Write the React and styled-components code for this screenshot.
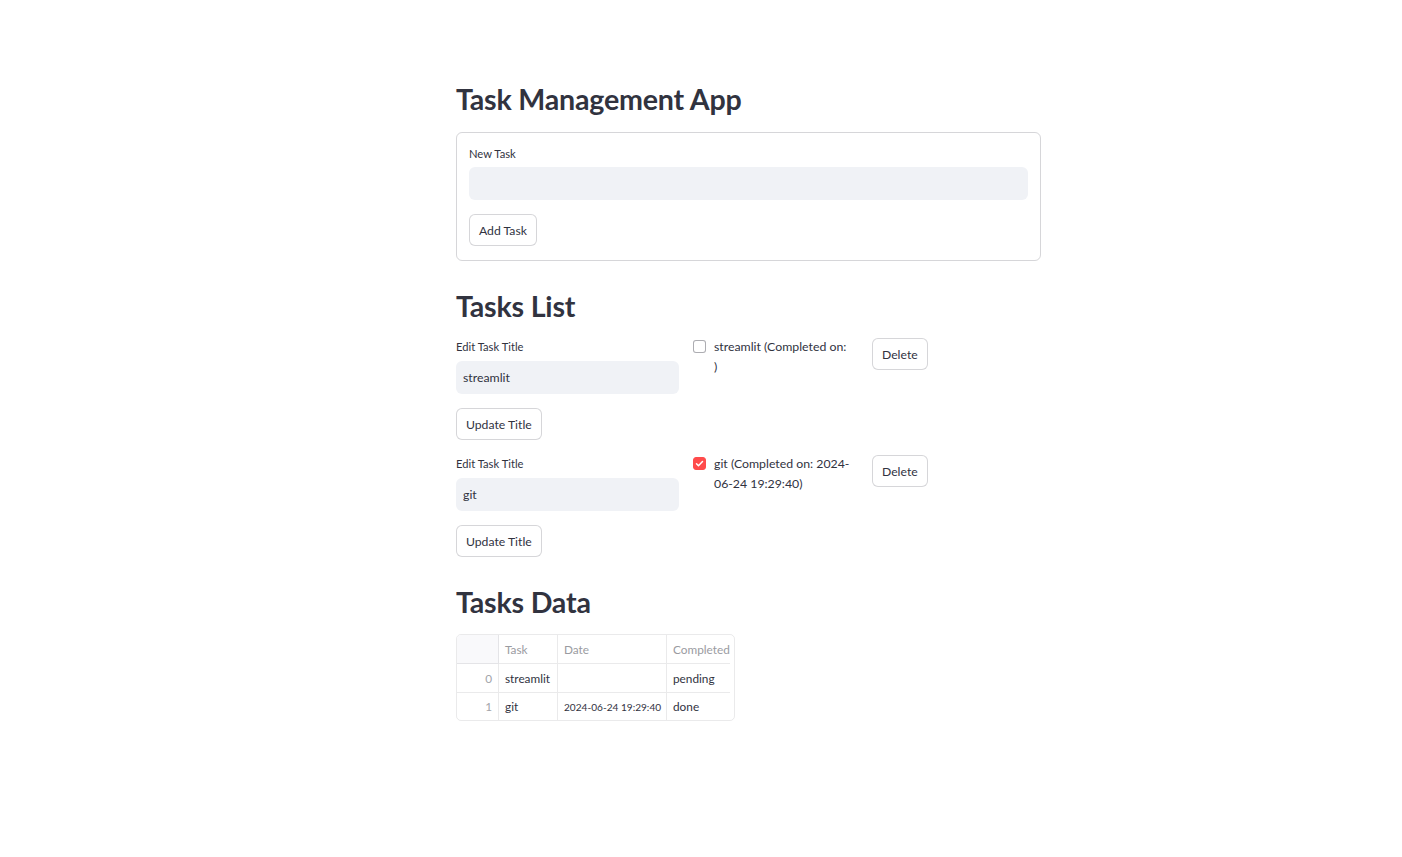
import React from "react";
import styled, { createGlobalStyle } from "styled-components";

const GlobalStyle = createGlobalStyle`
  html, body {
    margin: 0;
    padding: 0;
    background: #ffffff;
  }
  body {
    font-family: Lato, "Noto Sans", "Liberation Sans", sans-serif;
    color: #31333f;
  }
`;

const tasks = [
  { title: "streamlit", date: "", done: false },
  { title: "git", date: "2024-06-24 19:29:40", done: true },
];

function CheckIcon() {
  return (
    <svg width="9" height="9" viewBox="0 0 12 12" fill="none">
      <path
        d="M2 6.3l2.6 2.6L10 3.4"
        stroke="#fff"
        strokeWidth="2"
        strokeLinecap="round"
        strokeLinejoin="round"
      />
    </svg>
  );
}

function TaskRow({ task }) {
  return (
    <Row>
      <Column>
        <Label>Edit Task Title</Label>
        <TextInput defaultValue={task.title} />
        <Button>Update Title</Button>
      </Column>
      <CheckLine>
        <Box checked={task.done}>{task.done && <CheckIcon />}</Box>
        <CheckText>
          {task.title} (Completed on: {task.date})
        </CheckText>
      </CheckLine>
      <ActionCell>
        <Button>Delete</Button>
      </ActionCell>
    </Row>
  );
}

export default function App() {
  return (
    <>
      <GlobalStyle />
      <Page>
        <Main>
          <Title>Task Management App</Title>
          <Form>
            <Label tight>New Task</Label>
            <TextInput />
            <Button>Add Task</Button>
          </Form>

          <Heading>Tasks List</Heading>
          <RowList>
            {tasks.map((t) => (
              <TaskRow key={t.title} task={t} />
            ))}
          </RowList>

          <Heading>Tasks Data</Heading>
          <TableFrame>
            <Table>
              <HeadCell index />
              <HeadCell>Task</HeadCell>
              <HeadCell>Date</HeadCell>
              <HeadCell>Completed</HeadCell>
              {tasks.map((t, i) => {
                const last = i === tasks.length - 1;
                return (
                  <React.Fragment key={t.title}>
                    <IndexCell last={last}>{i}</IndexCell>
                    <Cell last={last}>{t.title}</Cell>
                    <Cell last={last} small>
                      {t.date}
                    </Cell>
                    <Cell last={last}>{t.done ? "done" : "pending"}</Cell>
                  </React.Fragment>
                );
              })}
            </Table>
          </TableFrame>
        </Main>
      </Page>
    </>
  );
}

const Page = styled.div`
  min-height: 857px;
  padding-left: 456px;
`;

const Main = styled.main`
  width: 585px;
  padding-top: 81px;
  display: flex;
  flex-direction: column;
  align-items: flex-start;
`;

const Title = styled.h1`
  margin: 0 0 15px;
  font-size: 28.6px;
  line-height: 36px;
  font-weight: 700;
  letter-spacing: -0.2px;
  color: #31333f;
`;

const Heading = styled.h2`
  margin: 27px 0 16px;
  font-size: 28.6px;
  line-height: 36px;
  font-weight: 700;
  letter-spacing: -0.2px;
  color: #31333f;
`;

const Form = styled.div`
  box-sizing: border-box;
  width: 100%;
  border: 1px solid rgba(49, 51, 63, 0.2);
  border-radius: 6px;
  padding: 13px 12px 14px;
  display: flex;
  flex-direction: column;
  align-items: flex-start;
`;

const Label = styled.div`
  font-size: 11.2px;
  line-height: ${(p) => (p.tight ? "16px" : "14px")};
  margin-bottom: ${(p) => (p.tight ? "5px" : "7px")};
`;

const TextInput = styled.input`
  box-sizing: border-box;
  width: 100%;
  height: 33px;
  border: none;
  border-radius: 6px;
  background: #f0f2f6;
  padding: 0 7px;
  font-family: inherit;
  font-size: 12.3px;
  color: #31333f;
  outline: none;
  margin-bottom: 14px;
`;

const Button = styled.button`
  box-sizing: border-box;
  height: 32px;
  padding: 0 9px;
  background: #fff;
  border: 1px solid rgba(49, 51, 63, 0.2);
  border-radius: 6px;
  font-family: inherit;
  font-size: 12.2px;
  color: #31333f;
  cursor: pointer;
`;

const RowList = styled.div`
  width: 100%;
  display: flex;
  flex-direction: column;
  gap: 17px;
`;

const Row = styled.div`
  display: grid;
  grid-template-columns: 223px 165px 1fr;
  column-gap: 14px;
  align-items: start;
`;

const Column = styled.div`
  display: flex;
  flex-direction: column;
  align-items: flex-start;
`;

const CheckLine = styled.div`
  display: flex;
  align-items: flex-start;
  gap: 8px;
`;

const ActionCell = styled.div`
  margin-top: -2px;
`;

const Box = styled.span`
  flex: none;
  box-sizing: border-box;
  width: 13px;
  height: 13px;
  border-radius: 3px;
  display: flex;
  align-items: center;
  justify-content: center;
  background: ${(p) => (p.checked ? "#ff4b4b" : "#fff")};
  border: 1px solid ${(p) => (p.checked ? "#ff4b4b" : "rgba(49, 51, 63, 0.4)")};
`;

const CheckText = styled.span`
  font-size: 12.3px;
  line-height: 20px;
  margin-top: -3px;
  padding-right: 8px;
`;

const TableFrame = styled.div`
  margin-top: -2px;
  display: inline-flex;
  padding-right: 4px;
  border: 1px solid rgba(49, 51, 63, 0.1);
  border-radius: 5px;
  overflow: hidden;
`;

const Table = styled.div`
  display: grid;
  grid-template-columns: 42px 59px 109px 63px;
  grid-template-rows: 29px 29px 27px;
  font-size: 11.8px;
`;

const HeadCell = styled.div`
  display: flex;
  align-items: center;
  padding: 0 6px;
  color: #9a9ba1;
  background: ${(p) => (p.index ? "#f9f9fb" : "#fff")};
  border-right: 1px solid rgba(49, 51, 63, 0.1);
  border-bottom: 1px solid rgba(49, 51, 63, 0.1);
  white-space: nowrap;
  overflow: hidden;
  &:nth-child(4) {
    border-right: none;
  }
`;

const Cell = styled.div`
  display: flex;
  align-items: center;
  padding: 0 6px;
  color: #31333f;
  font-size: ${(p) => (p.small ? "10.1px" : "11.8px")};
  white-space: nowrap;
  border-right: 1px solid rgba(49, 51, 63, 0.1);
  border-bottom: ${(p) => (p.last ? "none" : "1px solid rgba(49, 51, 63, 0.1)")};
  &:nth-child(4n) {
    border-right: none;
  }
`;

const IndexCell = styled(Cell)`
  justify-content: flex-end;
  color: #a3a4aa;
`;
